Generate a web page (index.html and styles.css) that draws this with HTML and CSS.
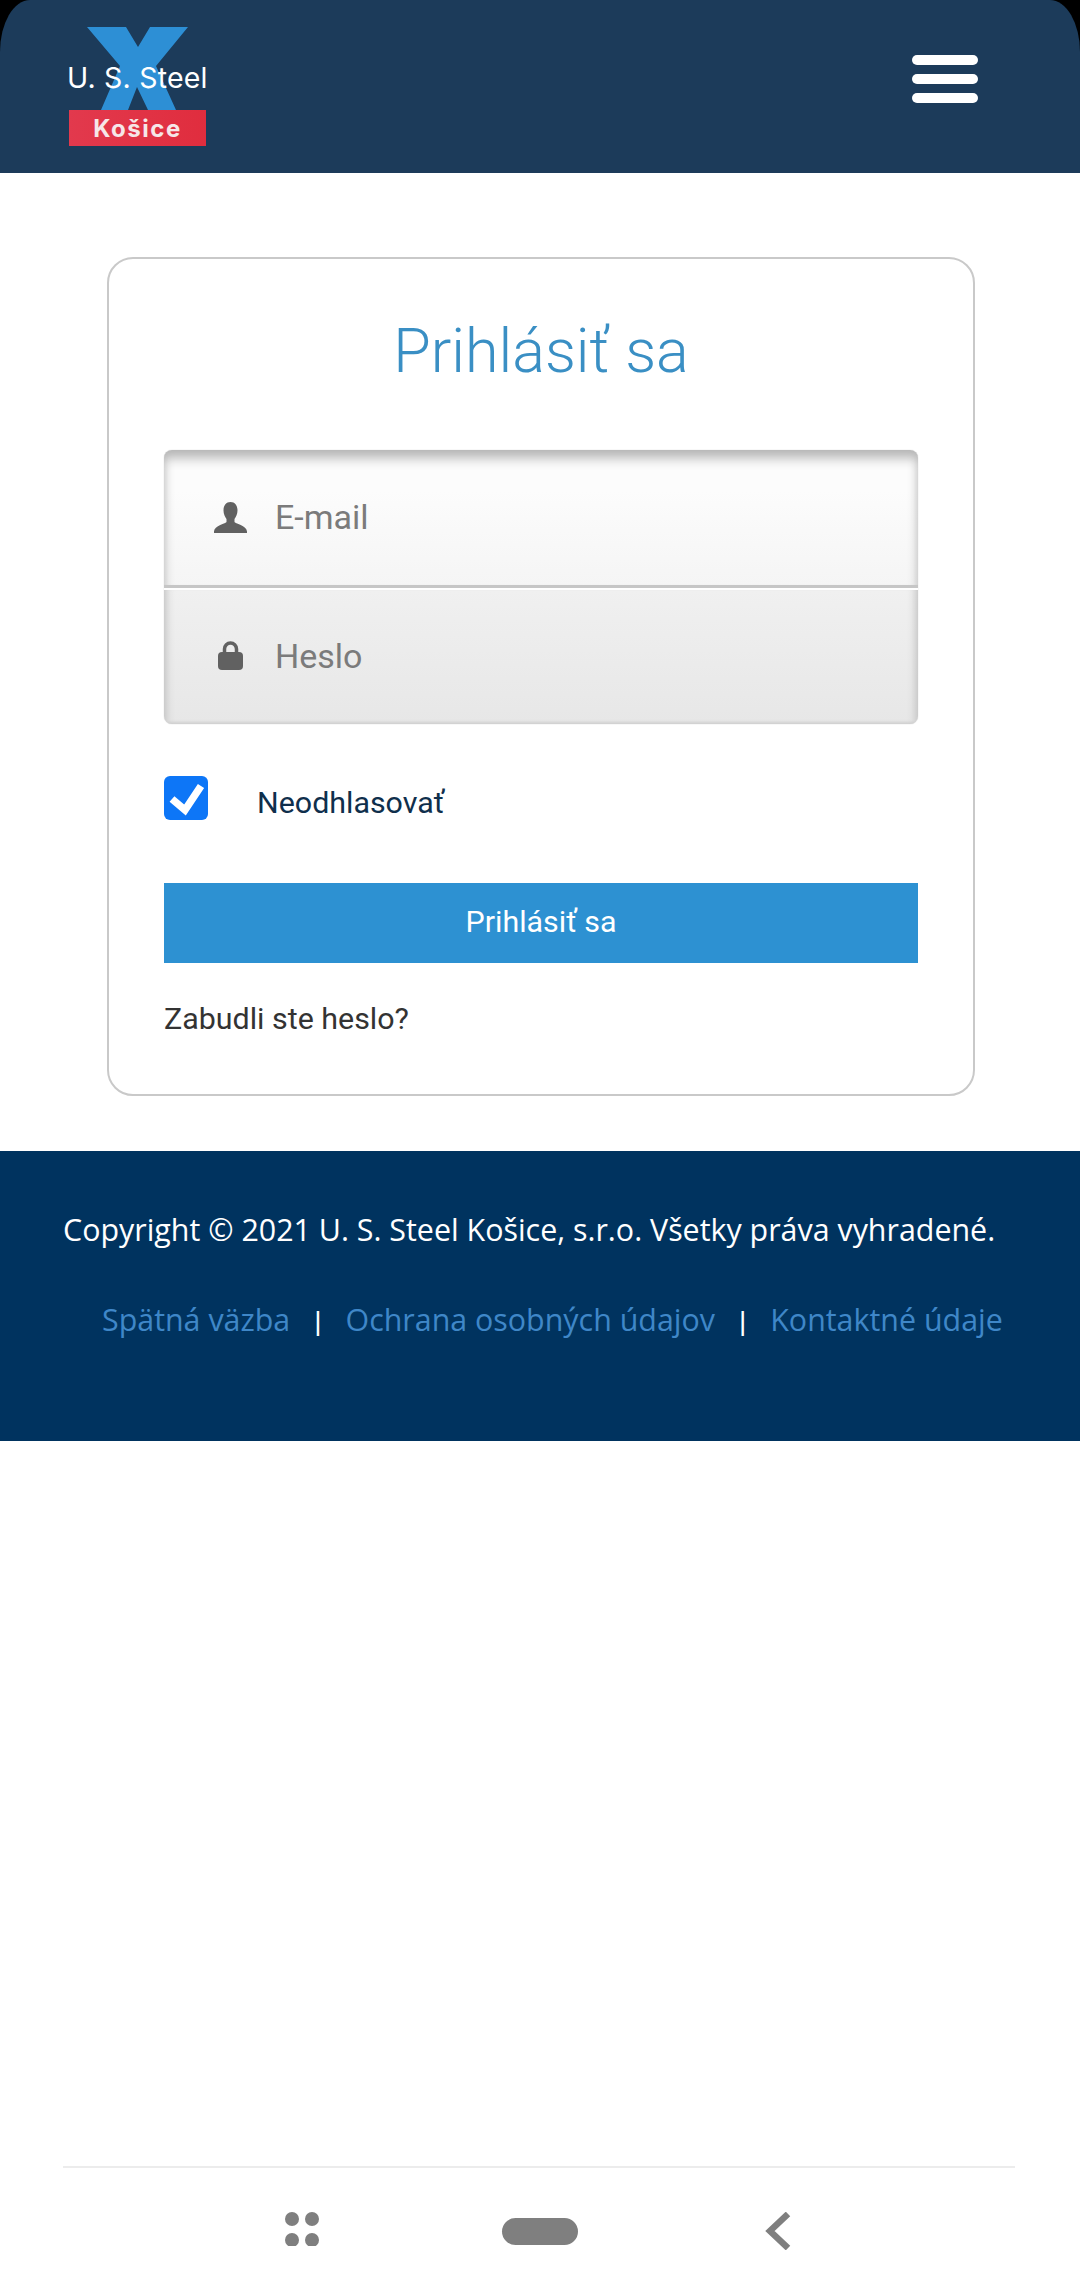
FILE: index.html
```html
<!DOCTYPE html>
<html lang="sk">
<head>
<meta charset="utf-8">
<title>Prihlásiť sa</title>
<link rel="stylesheet" href="styles.css">
</head>
<body>
<div class="page">
  <div class="header-wrap">
    <header class="header">
      <div class="logo">
        <svg class="logo-x" width="101" height="83" viewBox="0 0 101 83"><polygon fill="#2d8fd5" points="0,0 39,0 51,20 63,0 101,0 69,39 89,83 61,83 50,60 41,83 14,83 33,39"/></svg>
        <div class="logo-name">U. S. Steel</div>
        <div class="logo-city">Košice</div>
      </div>
      <div class="burger"><span></span><span></span><span></span></div>
    </header>
  </div>
  <main class="main">
    <section class="card">
      <h1 class="title">Prihlásiť sa</h1>
      <div class="fields">
        <label class="field field-top">
          <svg class="icon-user" width="33" height="31" viewBox="0 0 33 31"><path fill="#616161" d="M16.5 0C21 0 23.5 3.5 23.5 8.5c0 3.5-1.5 6.5-3 8.5v3c0 1.5 12.5 3.5 12.5 9.5V31H0v-1.500c0-6 12.500-8 12.500-9.500v-3c-1.500-2-3-5-3-8.500C9.500 3.500 12 0 16.500 0z"/></svg>
          <input class="field-input" type="text" placeholder="E-mail">
        </label>
        <label class="field field-bottom">
          <svg class="icon-lock" width="25" height="29" viewBox="0 0 25 29"><path fill="none" stroke="#616161" stroke-width="3.500" d="M6.500 13V8a6 6 0 0 1 12 0v5"/><rect fill="#616161" x="0" y="11" width="25" height="18" rx="4"/></svg>
          <input class="field-input" type="text" placeholder="Heslo">
        </label>
      </div>
      <div class="remember">
        <span class="check"><svg width="44" height="44" viewBox="0 0 44 44"><path fill="none" stroke="#fff" stroke-width="7.500" d="M8 23l13 11L37 10"/></svg></span>
        <span class="remember-label">Neodhlasovať</span>
      </div>
      <button class="submit" type="button">Prihlásiť sa</button>
      <a class="forgot">Zabudli ste heslo?</a>
    </section>
  </main>
  <footer class="footer">
    <p class="copyright">Copyright © 2021 U. S. Steel Košice, s.r.o. Všetky práva vyhradené.</p>
    <nav class="links">
      <a class="link">Spätná väzba</a>
      <span class="sep">|</span>
      <a class="link">Ochrana osobných údajov</a>
      <span class="sep">|</span>
      <a class="link">Kontaktné údaje</a>
    </nav>
  </footer>
  <div class="navbar">
    <div class="nav-icons">
      <svg width="34" height="34" viewBox="0 0 34 34"><g fill="#7f7f7f"><circle cx="7" cy="7" r="7"/><circle cx="27" cy="7" r="7"/><circle cx="7" cy="28" r="7"/><circle cx="27" cy="28" r="7"/></g></svg>
      <span class="nav-pill"></span>
      <svg width="26" height="38" viewBox="0 0 26 38"><path fill="none" stroke="#7f7f7f" stroke-width="6.500" d="M23 2L5 19l18 17"/></svg>
    </div>
  </div>
</div>
</body>
</html>
```
FILE: styles.css
```css
* { box-sizing: border-box; }
html, body { margin: 0; padding: 0; background: #fff; }
.page { width: 1080px; height: 2296px; display: flex; flex-direction: column; overflow: hidden; font-family: Roboto, sans-serif; }

.header-wrap { background: #000; }
.header { height: 173px; background: #1c3b5a; border-radius: 30px 30px 0 0 / 52px 52px 0 0; display: flex; align-items: flex-start; justify-content: space-between; padding: 27px 102px 0 68px; }
.logo { position: relative; width: 140px; height: 119px; display: flex; flex-direction: column; }
.logo-x { position: absolute; left: 19px; top: 0; }
.logo-name { position: relative; margin: 35px 0 0 -1px; height: 48px; color: #fff; font-family: Inter, sans-serif; font-size: 28.5px; line-height: 32px; letter-spacing: 0.2px; white-space: nowrap; }
.logo-city { position: relative; margin-left: 1px; width: 137px; height: 36px; background: linear-gradient(90deg, #e2394d, #e02d3e); color: #f6e6e8; font-family: Inter, sans-serif; font-weight: 700; font-size: 24px; line-height: 38px; letter-spacing: 1.5px; text-align: center; }
.burger { margin-top: 28px; width: 66px; display: flex; flex-direction: column; gap: 9px; }
.burger span { display: block; height: 10px; border-radius: 5px; background: #fff; }

.main { padding: 84px 0 55px; }
.card { width: 868px; height: 839px; margin: 0 auto 0 107px; border: 2px solid #c9c9c9; border-radius: 26px; padding: 0 55px; display: flex; flex-direction: column; }
.title { margin: 52px 0 0; height: 80px; font-size: 61px; line-height: 81px; font-weight: 300; color: #3a8fc4; text-align: center; }
.fields { margin-top: 59px; height: 274px; border-radius: 8px; overflow: hidden; display: flex; flex-direction: column; box-shadow: 0 0 1px #bbb; }
.field { display: flex; align-items: center; padding-left: 50px; }
.field-top { height: 138px; padding-bottom: 1px; background: linear-gradient(#fcfcfc 30%, #f5f5f5); border-bottom: 3px solid #c6c6c6; box-shadow: inset 0 16px 12px -8px #b4b4b4, inset 10px 0 8px -8px #c8c8c8, inset -10px 0 8px -8px #c8c8c8; }
.field-bottom { height: 136px; padding-bottom: 3px; background: linear-gradient(#f0f0f0, #e7e7e7); border-top: 2px solid #fff; box-shadow: inset 0 -3px 3px -1px #cfcfcf, inset 10px 0 8px -8px #bdbdbd, inset -10px 0 8px -8px #bdbdbd; }
.icon-lock { margin-left: 4px; margin-right: 32px; }
.icon-user { margin-right: 28px; }
.field-input { flex: 1; min-width: 0; border: 0; outline: 0; padding: 0; background: transparent; font-family: Roboto, sans-serif; font-size: 34px; color: #7b7b7b; }
.field-input::placeholder { color: #7b7b7b; opacity: 1; }
.remember { margin-top: 52px; height: 44px; display: flex; align-items: center; gap: 49px; }
.check { width: 44px; height: 44px; border-radius: 6px; background: #0d76f7; display: block; }
.check svg { display: block; }
.remember-label { padding-top: 8px; font-size: 30.4px; color: #0f2f4c; }
.submit { margin-top: 63px; height: 80px; border: 0; padding: 0 0 4px; background: #2d91d2; color: #fff; font-family: Roboto, sans-serif; font-size: 30.4px; }
.forgot { margin-top: 38px; font-size: 30.4px; line-height: 35px; color: #333; }

.footer { height: 290px; background: #00335f; padding-top: 59px; font-family: "Open Sans", sans-serif; font-size: 30.4px; }
.copyright { margin: 0 0 0 63px; line-height: 40px; color: #fff; white-space: nowrap; }
.links { margin: 50px 0 0 102px; line-height: 40px; display: flex; white-space: nowrap; }
.link { color: #3f87c8; }
.sep { color: #fff; margin: 0 20.5px; font-size: 26px; font-weight: 600; }

.navbar { margin-top: auto; height: 130px; padding: 0 65px 0 63px; }
.nav-icons { height: 100%; border-top: 2px solid #ececec; display: flex; align-items: flex-start; padding: 44px 0 0 222px; }
.nav-pill { margin: 6px 0 0 183px; width: 76px; height: 27px; border-radius: 14px; background: #7f7f7f; }
.nav-icons svg:last-child { margin: 0 0 0 187px; }
```
